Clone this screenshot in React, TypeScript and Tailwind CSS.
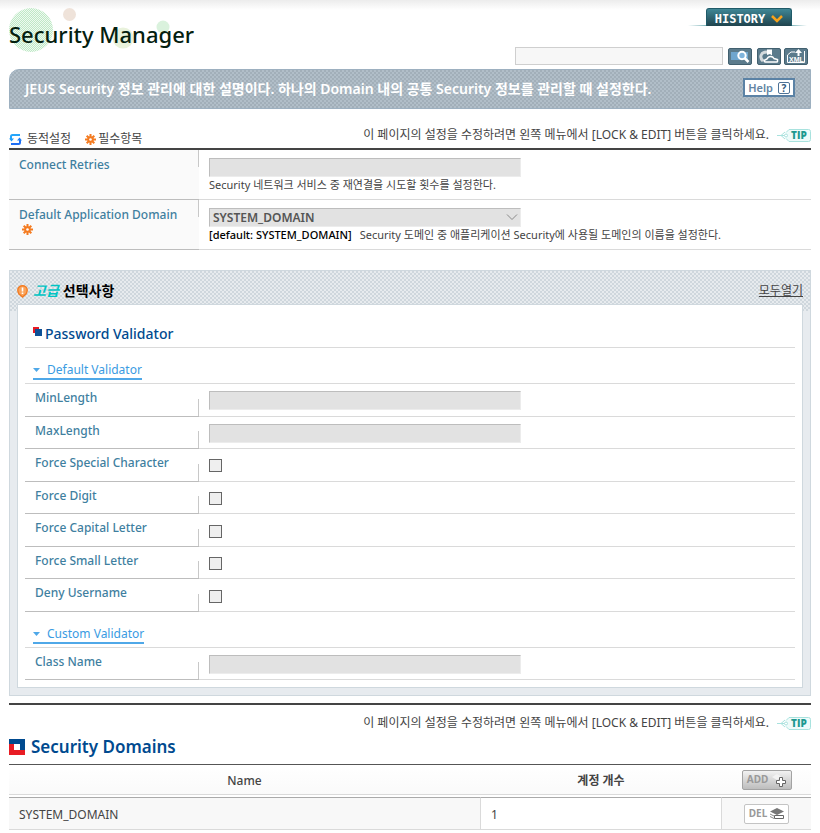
import React from "react";

const fieldClass =
  "block h-[19px] w-[312px] max-w-full border border-t-[#bdbdbd] border-l-[#bdbdbd] border-r-[#ececec] border-b-[#ececec] bg-[#e2e2e2] px-1 text-xs outline-none";

function StarIcon() {
  return (
    <svg width="11" height="11" viewBox="0 0 11 11" className="shrink-0" aria-hidden="true">
      <g stroke="#f47b20" strokeWidth="2">
        <path d="M5.5 0v11M0 5.5h11M1.7 1.7l7.6 7.6M9.3 1.7L1.7 9.3" />
      </g>
      <circle cx="5.5" cy="5.5" r="3.2" fill="#f47b20" />
      <circle cx="5.5" cy="5.5" r="1.3" fill="#fff" />
    </svg>
  );
}

function SyncIcon() {
  return (
    <svg width="13" height="11" viewBox="0 0 13 11" className="shrink-0" aria-hidden="true">
      <path d="M2 5V2.500Q2 1 3.500 1H11" fill="none" stroke="#25a5fa" strokeWidth="2" />
      <path d="M0 4.500h5L2.500 7.500z" fill="#1f9cf8" />
      <path d="M11 6v2.500Q11 10 9.500 10H2" fill="none" stroke="#1f6ff5" strokeWidth="2" />
      <path d="M8 6.500h5L10.500 3.500z" fill="#1f7ff5" />
    </svg>
  );
}

function TipBadge() {
  return (
    <svg width="34" height="13" viewBox="0 0 34 13" aria-hidden="true" className="shrink-0">
      <path d="M9 3.500L12 .5h19.500q2 0 2 2v8q0 2-2 2H12l-3-3" fill="#eefbfa" stroke="#a8e2de" />
      <path d="M0 6.500h9M4 6.500l4-3.500M4 6.500l4 3.500" fill="none" stroke="#a8e2de" />
      <circle cx="9" cy="6.500" r="1.500" fill="#fff" stroke="#a8e2de" />
      <text x="14" y="10" fontSize="10" fontWeight="800" fontFamily="Open Sans, sans-serif" fill="#1d9990">
        TIP
      </text>
    </svg>
  );
}

function EditNotice() {
  return (
    <p className="flex items-center justify-end gap-2 text-right text-xs leading-4 text-[#444]">
      이 페이지의 설정을 수정하려면 왼쪽 메뉴에서 [LOCK &amp; EDIT] 버튼을 클릭하세요.
      <TipBadge />
    </p>
  );
}

function ToolButton({ label, children }: { label: string; children: React.ReactNode }) {
  return (
    <button
      type="button"
      aria-label={label}
      className="flex h-[17px] w-6 items-center justify-center rounded-[2px] border border-[#42606f] bg-[#5b7b8c]"
    >
      {children}
    </button>
  );
}

function ValidatorRow({ id, label, type }: { id: string; label: string; type: "text" | "checkbox" }) {
  return (
    <div className="flex">
      <div className="flex w-[174px] shrink-0 border-b border-[#bdbdbd]">
        <label htmlFor={id} className="flex-1 pt-[6px] pl-[10px] text-xs leading-4 font-medium text-[#3f7f9f]">
          {label}
        </label>
        <span className="h-[17px] w-px self-end bg-[#c8c8c8]" />
      </div>
      <div className="flex flex-1 items-center border-b border-[#dadada] pt-[2px] pl-[10px]">
        {type === "text" ? (
          <input id={id} type="text" disabled className={fieldClass} />
        ) : (
          <input id={id} type="checkbox" disabled className="size-[13px] appearance-none border border-[#666] bg-[#efefef]" />
        )}
      </div>
    </div>
  );
}

function ValidatorTab({ children }: { children: React.ReactNode }) {
  return (
    <div className="flex h-9 items-end border-b border-[#dadada] pb-[3px] pl-2">
      <button
        type="button"
        className="flex items-center gap-[7px] border-b-2 border-[#4fa8e8] text-xs leading-4 font-normal text-[#3a9be2]"
      >
        <svg width="7" height="4" viewBox="0 0 7 4" aria-hidden="true">
          <path d="M0 0h7L3.500 4z" fill="#4fa8e8" />
        </svg>
        {children}
      </button>
    </div>
  );
}

const flags = [
  ["force-special", "Force Special Character"],
  ["force-digit", "Force Digit"],
  ["force-capital", "Force Capital Letter"],
  ["force-small", "Force Small Letter"],
  ["deny-username", "Deny Username"],
];

export default function App() {
  return (
    <div className="bg-[linear-gradient(#ececec,#ffffff_10px)] px-[9px] pb-[3px] font-['Noto_Sans','Noto_Sans_CJK_KR',sans-serif] text-[#444]">
      <header className="flex h-[69px] justify-between">
        <div className="relative">
          <svg width="190" height="54" viewBox="0 0 190 54" className="absolute top-0 left-0" aria-hidden="true">
            <defs>
              <pattern id="dots" width="2" height="2" patternUnits="userSpaceOnUse">
                <rect width="2" height="2" fill="#eefaf0" />
                <rect width="1" height="1" fill="#bfe8c6" />
                <rect x="1" y="1" width="1" height="1" fill="#bfe8c6" />
              </pattern>
            </defs>
            <circle cx="22" cy="30" r="22" fill="url(#dots)" />
            <circle cx="60.500" cy="14.500" r="6.500" fill="#efe3da" />
            <circle cx="114" cy="38" r="10.500" fill="#e9f2dc" />
            <circle cx="154" cy="27" r="6.500" fill="#daf2dd" />
          </svg>
          <h1 className="relative pt-[18px] text-[22px] leading-8 font-medium text-[#04200f]">Security Manager</h1>
        </div>
        <div className="flex flex-col items-end">
          <div className="flex items-end pt-2 pr-1">
            <span className="h-px w-[18px] bg-linear-to-r from-white to-[#7fb6bb]" />
            <button
              type="button"
              className="flex h-[18px] w-[86px] items-center justify-center gap-[6px] rounded-t-[3px] border border-b-0 border-[#1f5a68] bg-linear-to-b from-[#3f8796] to-[#20444e] pt-[2px] font-['DejaVu_Sans_Mono',monospace] text-xs leading-4 font-bold text-white"
            >
              HISTORY
              <svg width="12" height="8" viewBox="0 0 12 8" aria-hidden="true">
                <path d="M1 1l5 5 5-5" fill="none" stroke="#f7a21b" strokeWidth="2.500" />
              </svg>
            </button>
            <span className="h-px w-[15px] bg-linear-to-l from-white to-[#7fb6bb]" />
          </div>
          <div className="mt-[21px] flex items-center pr-[3px]">
            <input
              type="text"
              aria-label="Search"
              className="mr-[5px] h-[18px] w-[208px] border border-[#cfcfcf] bg-[#f7f7f7] px-1 text-xs outline-none"
            />
            <ToolButton label="Search">
              <svg width="20" height="13" viewBox="0 0 20 13" className="shrink-0" aria-hidden="true">
                <rect x="1" y="2" width="17" height="8" fill="#6fa6cf" />
                <circle cx="12" cy="5.500" r="3.700" fill="#7fb4dc" stroke="#fff" strokeWidth="2" />
                <path d="M14.500 8l4 4" stroke="#fff" strokeWidth="2.500" />
              </svg>
            </ToolButton>
            <span className="w-[5px]" />
            <ToolButton label="Reload">
              <svg width="20" height="15" viewBox="0 0 20 15" className="shrink-0" aria-hidden="true">
                <path d="M4 12C.5 9 1 3 8 3" fill="none" stroke="#d4dadd" strokeWidth="3" />
                <path d="M8 .5h5v6l-2-1.500-3 1z" fill="#fff" />
                <path
                  d="M6.500 13Q5 13 5 11.500L8 10q1-2.500 3.500-2.500T15 9.500l3.500 1v2q0 .5-1 .5z"
                  fill="#5b7b8c"
                  stroke="#fff"
                  strokeWidth="1.500"
                />
              </svg>
            </ToolButton>
            <span className="w-[3px]" />
            <ToolButton label="Export XML">
              <svg width="20" height="15" viewBox="0 0 20 15" className="shrink-0" aria-hidden="true">
                <path d="M9 3H5L1.500 6v7.500h17V2" fill="none" stroke="#fff" />
                <path d="M12.500 0L16 4h-2.500v3h-2V4H9z" fill="#fff" />
                <text x="3" y="12.500" fontSize="7" fontWeight="700" fontFamily="Liberation Sans, sans-serif" fill="#fff">
                  XML
                </text>
              </svg>
            </ToolButton>
          </div>
        </div>
      </header>

      <section className="flex h-10 items-center justify-between rounded-tl-[10px] border border-[#9db0c0] bg-[repeating-conic-gradient(#a2afb9_0%_25%,#b1bec8_0%_50%)] bg-[length:4px_4px] pr-[15px] pl-[15px]">
        <p className="text-sm font-semibold text-white">
          JEUS Security 정보 관리에 대한 설명이다. 하나의 Domain 내의 공통 Security 정보를 관리할 때 설정한다.
        </p>
        <button
          type="button"
          className="mb-[3px] flex h-[19px] w-[52px] shrink-0 items-center justify-center gap-[5px] border-2 border-[#5b82a5] bg-white text-[11px] leading-3 font-semibold text-[#6384a3]"
        >
          Help
          <span className="flex size-3 items-center justify-center rounded-[2px] border border-[#4f7396] text-[10px] leading-[10px] font-bold text-[#34587c]">
            ?
          </span>
        </button>
      </section>

      <div className="mt-[17px] flex h-[22px] items-start justify-between pt-px">
        <div className="flex items-center pt-1 text-xs leading-4">
          <SyncIcon />
          <span className="ml-[5px]">동적설정</span>
          <span className="ml-[14px] flex items-center gap-[2px]">
            <StarIcon />
            필수항목
          </span>
        </div>
        <EditNotice />
      </div>

      <section className="border-t-2 border-[#444]">
        <div className="flex h-[50px]">
          <div className="flex w-[190px] shrink-0 border-b border-[#bdbdbd] bg-[#fafafa]">
            <label
              htmlFor="connect-retries"
              className="flex-1 pt-[7px] pl-[10px] text-xs leading-4 font-medium text-[#3f7f9f]"
            >
              Connect Retries
            </label>
            <span className="h-[17px] w-px bg-[#c8c8c8]" />
          </div>
          <div className="flex-1 border-b border-[#dadada] pt-2 pl-[10px]">
            <input id="connect-retries" type="text" disabled className={fieldClass} />
            <p className="text-[11px] leading-4">Security 네트워크 서비스 중 재연결을 시도할 횟수를 설정한다.</p>
          </div>
        </div>
        <div className="flex h-[50px]">
          <div className="flex w-[190px] shrink-0 border-b border-[#bdbdbd] bg-[#fafafa]">
            <label
              htmlFor="default-domain"
              className="flex-1 pt-[7px] pl-[10px] text-xs leading-4 font-medium text-[#3f7f9f]"
            >
              Default Application Domain
              <span className="block pt-px pl-[3px]">
                <StarIcon />
              </span>
            </label>
            <span className="h-[17px] w-px bg-[#c8c8c8]" />
          </div>
          <div className="flex-1 border-b border-[#dadada] pt-2 pl-[10px]">
            <div className="relative w-[312px] max-w-full">
              <select
                id="default-domain"
                disabled
                className="block h-[19px] w-full appearance-none border border-t-[#bdbdbd] border-l-[#bdbdbd] border-r-[#ececec] border-b-[#ececec] bg-[#e2e2e2] pl-[3px] text-xs leading-4 font-semibold text-[#555] opacity-100"
              >
                <option>SYSTEM_DOMAIN</option>
              </select>
              <svg width="12" height="7" viewBox="0 0 12 7" className="absolute top-[6px] right-[3px]" aria-hidden="true">
                <path d="M1 .5l5 5 5-5" fill="none" stroke="#888" />
              </svg>
            </div>
            <p className="text-[11px] leading-4">
              <span className="mr-2 font-medium text-black">[default: SYSTEM_DOMAIN]</span>
              Security 도메인 중 애플리케이션 Security에 사용될 도메인의 이름을 설정한다.
            </p>
          </div>
        </div>
      </section>

      <section className="mt-5 border border-[#cfd8de] bg-[#e7ebef]">
        <div className="flex h-10 items-start justify-between bg-[repeating-conic-gradient(#cfd7dd_0%_25%,#e7ebee_0%_50%)] bg-[length:4px_4px] px-[7px] pt-3">
          <h2 className="flex items-center text-sm leading-4 font-bold text-black">
            <svg width="11" height="13" viewBox="0 0 11 13" className="mr-[5px]" aria-hidden="true">
              <path
                d="M5.500 12L2 9Q.8 7.500.8 5a4.700 4.200 0 0 1 9.400 0Q10.200 7.500 9 9z"
                fill="#f9a45c"
                stroke="#f47b20"
                strokeWidth="1.400"
              />
              <path d="M5.500 2.500v4M5.500 7.500v1.500" stroke="#fff" strokeWidth="1.600" />
            </svg>
            <em className="mr-1 text-[#00c4c4]">고급</em>
            선택사항
          </h2>
          <a href="#all" className="text-xs leading-4 underline">
            모두열기
          </a>
        </div>
        <div className="mx-[7px] -mt-[7px] mb-[7px] border border-[#cfd8de] bg-white px-[7px] pb-[7px]">
          <h3 className="flex h-[43px] items-center gap-[3px] border-b border-[#dadada] pt-[15px] pl-2 text-sm leading-5 font-medium text-[#004a8f]">
            <svg width="9" height="9" viewBox="0 0 9 9" className="mb-[5px]" aria-hidden="true">
              <rect width="6" height="6" fill="#e81c24" />
              <rect x="2" y="2" width="7" height="7" fill="#0d5096" />
            </svg>
            Password Validator
          </h3>
          <ValidatorTab>Default Validator</ValidatorTab>
          <div className="grid h-[228px] auto-rows-fr">
            <ValidatorRow id="min-length" label="MinLength" type="text" />
            <ValidatorRow id="max-length" label="MaxLength" type="text" />
            {flags.map(([id, label]) => (
              <ValidatorRow key={id} id={id} label={label} type="checkbox" />
            ))}
          </div>
          <ValidatorTab>Custom Validator</ValidatorTab>
          <div className="grid h-8">
            <ValidatorRow id="class-name" label="Class Name" type="text" />
          </div>
        </div>
      </section>

      <section className="mt-[7px] border-t-2 border-[#444] pt-[10px]">
        <EditNotice />
        <h2 className="flex h-[33px] items-center gap-[6px] pb-px text-[17px] leading-6 font-semibold text-[#004a8f]">
          <svg width="16" height="16" viewBox="0 0 16 16" className="mb-px" aria-hidden="true">
            <path d="M0 0h16v11H11V5H0z" fill="#004a8f" />
            <path d="M0 5h5v6h11v5H0z" fill="#e81c24" />
          </svg>
          Security Domains
        </h2>
        <table className="w-full table-fixed border-separate border-spacing-0 border-t border-[#555] text-xs">
          <colgroup>
            <col />
            <col className="w-[242px]" />
            <col className="w-[89px]" />
          </colgroup>
          <thead>
            <tr className="h-[30px] bg-linear-to-b from-white to-[#fafafa]">
              <th className="border-b border-[#dadada] p-0 pt-[2px] font-medium">Name</th>
              <th className="border-b border-[#dadada] p-0 pt-[2px] font-semibold">계정 개수</th>
              <th className="border-b border-[#dadada] p-0">
                <button
                  type="button"
                  className="mx-auto flex h-5 w-[50px] items-center justify-center gap-1 rounded-[2px] border border-[#a3a3a3] bg-linear-to-b from-[#f2f2f2] to-[#bdbdbd] text-[10px] font-bold text-[#999]"
                >
                  ADD
                  <svg width="14" height="14" viewBox="0 0 14 14" aria-hidden="true">
                    <path d="M0 4l5-3 5 3-5 3z" fill="#f3f3f3" />
                    <path d="M7.500 4.500h3v3h3v3h-3v3h-3v-3h-3v-3h3z" fill="#fff" stroke="#666" />
                  </svg>
                </button>
              </th>
            </tr>
          </thead>
          <tbody className="before:block before:h-[2px] before:content-['']">
            <tr className="h-[33px]">
              <td className="border-t border-b border-t-[#aaa] border-b-[#dadada] bg-[#f8f8f8] p-0 pt-[3px] pl-[10px]">
                SYSTEM_DOMAIN
              </td>
              <td className="border-t border-r border-b border-l border-[#dadada] border-t-[#aaa] p-0 pt-[3px] pl-[10px]">
                1
              </td>
              <td className="border-t border-b border-t-[#aaa] border-b-[#dadada] bg-[#f8f8f8] p-0">
                <button
                  type="button"
                  className="mx-auto flex h-5 w-[45px] items-center justify-center gap-[3px] rounded-[2px] border border-[#c4c4c4] bg-white text-[10px] font-bold text-[#999]"
                >
                  DEL
                  <svg width="14" height="12" viewBox="0 0 14 12" aria-hidden="true">
                    <path d="M0 3.500L7 0l7 3.500L7 7z" fill="#777" />
                    <path d="M0 6l4 2M0 8.500l4 2" stroke="#888" />
                    <path d="M4.500 7.500h9v3h-9z" fill="#fff" stroke="#666" />
                  </svg>
                </button>
              </td>
            </tr>
          </tbody>
        </table>
      </section>
    </div>
  );
}
